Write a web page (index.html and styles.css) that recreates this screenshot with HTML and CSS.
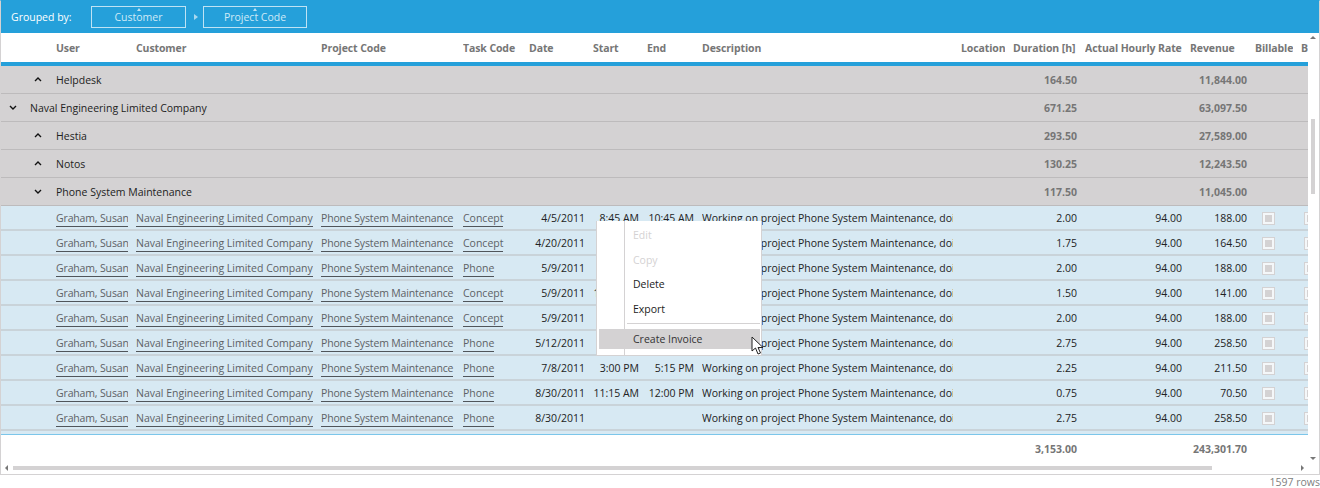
FILE: index.html
```html
<!DOCTYPE html>
<html lang="en">
<head>
  <meta charset="UTF-8" />
  <title>Timesheet grid</title>
  <link rel="stylesheet" href="styles.css">
</head>
<body>
  <div class="grid-box">
    <div class="group-bar">
      <span class="group-label">Grouped by:</span>
      <div class="chip chip-customer"><i class="chip-arrow"></i>Customer</div>
      <i class="chip-sep"></i>
      <div class="chip chip-project"><i class="chip-arrow"></i>Project Code</div>
    </div>

    <div class="row head-row">
      <span></span>
      <span>User</span><span>Customer</span><span>Project Code</span><span>Task Code</span>
      <span>Date</span><span>Start</span><span>End</span><span>Description</span><span>Location</span>
      <span>Duration [h]</span><span>Actual Hourly Rate</span><span>Revenue</span><span>Billable</span><span>B</span>
    </div>

    <div class="body-wrap">
      <div class="group level-2">
        <svg class="chev" viewBox="0 0 8 5"><path d="M1 4 L4 1 L7 4"/></svg>
        <span class="group-name">Helpdesk</span>
        <span class="group-dur">164.50</span><span class="group-rev">11,844.00</span>
      </div>
      <div class="group level-1">
        <svg class="chev" viewBox="0 0 8 5"><path d="M1 1 L4 4 L7 1"/></svg>
        <span class="group-name">Naval Engineering Limited Company</span>
        <span class="group-dur">671.25</span><span class="group-rev">63,097.50</span>
      </div>
      <div class="group level-2">
        <svg class="chev" viewBox="0 0 8 5"><path d="M1 4 L4 1 L7 4"/></svg>
        <span class="group-name">Hestia</span>
        <span class="group-dur">293.50</span><span class="group-rev">27,589.00</span>
      </div>
      <div class="group level-2">
        <svg class="chev" viewBox="0 0 8 5"><path d="M1 4 L4 1 L7 4"/></svg>
        <span class="group-name">Notos</span>
        <span class="group-dur">130.25</span><span class="group-rev">12,243.50</span>
      </div>
      <div class="group level-2">
        <svg class="chev" viewBox="0 0 8 5"><path d="M1 1 L4 4 L7 1"/></svg>
        <span class="group-name">Phone System Maintenance</span>
        <span class="group-dur">117.50</span><span class="group-rev">11,045.00</span>
      </div>
      <div id="rows"></div>
    </div>

    <div class="foot-row">
      <span class="foot-dur">3,153.00</span><span class="foot-rev">243,301.70</span>
    </div>

    <div class="hscroll">
      <i class="arrow-left"></i>
      <div class="hscroll-track"><div class="hscroll-thumb"></div></div>
      <i class="arrow-right"></i>
    </div>

    <div class="vscroll">
      <i class="arrow-up"></i>
      <div class="vscroll-track"><div class="vscroll-thumb"></div></div>
      <i class="arrow-down"></i>
    </div>

    <div class="menu">
      <div class="menu-item disabled">Edit</div>
      <div class="menu-item disabled">Copy</div>
      <div class="menu-item">Delete</div>
      <div class="menu-item">Export</div>
      <div class="menu-line"></div>
      <div class="menu-item active">Create Invoice</div>
    </div>

    <svg class="cursor" viewBox="0 0 15 20"><path d="M1 1 L1 15 L4.500 12 L7 18 L9.500 17 L7 11.500 L12 11.500 Z"/></svg>
  </div>

  <div class="row-count">1597 rows</div>

  <script>
    const data = [
      ['Concept', '4/5/2011', '8:45 AM', '10:45 AM', '2.00', '188.00'],
      ['Concept', '4/20/2011', '', '', '1.75', '164.50'],
      ['Phone', '5/9/2011', '', '', '2.00', '188.00'],
      ['Concept', '5/9/2011', '10:00 AM', '', '1.50', '141.00'],
      ['Concept', '5/9/2011', '', '', '2.00', '188.00'],
      ['Phone', '5/12/2011', '', '', '2.75', '258.50'],
      ['Phone', '7/8/2011', '3:00 PM', '5:15 PM', '2.25', '211.50'],
      ['Phone', '8/30/2011', '11:15 AM', '12:00 PM', '0.75', '70.50'],
      ['Phone', '8/30/2011', '', '', '2.75', '258.50']
    ];

    document.getElementById('rows').innerHTML = data.map(d => `
      <div class="row data-row">
        <span></span>
        <span><a class="tight">Graham, Susan</a></span>
        <span><a>Naval Engineering Limited Company</a></span>
        <span><a class="tight">Phone System Maintenance</a></span>
        <span><a>${d[0]}</a></span>
        <span class="num">${d[1]}</span>
        <span class="num">${d[2]}</span>
        <span class="num">${d[3]}</span>
        <span>Working on project Phone System Maintenance, doing some work</span>
        <span></span>
        <span class="num">${d[4]}</span>
        <span class="num">94.00</span>
        <span class="num">${d[5]}</span>
        <span class="check-cell first"><i class="check"></i></span>
        <span class="check-cell"><i class="check"></i></span>
      </div>`).join('');
  </script>
</body>
</html>
```

FILE: styles.css
```css
* { box-sizing: border-box; }

html, body { height: 488px; overflow: hidden; }

body {
  margin: 0;
  background: #fff;
  font-family: 'Open Sans', sans-serif;
  font-size: 10.5px;
  color: #222;
}

.grid-box {
  position: relative;
  width: 1320px;
  height: 475px;
  border: 1px solid #d4d2d3;
  border-top: 1px solid #25a0da;
  overflow: hidden;
}

/* top bar */
.group-bar {
  display: flex;
  align-items: center;
  height: 32px;
  background: #25a0da;
  color: #fff;
}
.group-label { margin-left: 10px; width: 80px; }
.chip {
  position: relative;
  height: 22px;
  line-height: 20px;
  border: 1px solid #bfe3f4;
  color: #cfeaf7;
  text-align: center;
}
.chip-customer { width: 95px; }
.chip-project { width: 104px; }
.chip-arrow {
  position: absolute;
  left: 50%;
  top: 1px;
  margin-left: -2px;
  border-left: 2.500px solid transparent;
  border-right: 2.500px solid transparent;
  border-bottom: 3px solid #bfe3f4;
}
.chip-sep {
  width: 0;
  margin: 0 5px 0 8px;
  border-top: 3px solid transparent;
  border-bottom: 3px solid transparent;
  border-left: 4px solid #a8d8ef;
}

/* shared columns */
.row {
  display: grid;
  grid-template-columns: 47px 72px 177px 134px 58px 56px 46px 47px 251px 44px 64px 97px 57px 38px 40px;
  column-gap: 8px;
  align-items: center;
  width: 1340px;
}
.row > span { overflow: hidden; white-space: nowrap; }
.num { text-align: right; }

.head-row {
  height: 29px;
  font-weight: 700;
  letter-spacing: -0.1px;
  color: #767676;
  width: 1307px;
  overflow: hidden;
}

.body-wrap {
  width: 1307px;
  height: 373px;
  overflow: hidden;
  background: #d7e9f3;
  border-top: 4px solid #25a0da;
  border-bottom: 1px solid #7cc6ea;
}

/* group rows */
.group {
  position: relative;
  display: flex;
  align-items: center;
  height: 28px;
  background: #d4d2d3;
  border-bottom: 1px solid #bdbbbc;
}
.group-name { position: absolute; }
.level-1 .group-name { left: 29px; }
.level-2 .group-name { left: 55px; }
.chev {
  position: absolute;
  width: 8px;
  height: 5px;
  fill: none;
  stroke: #111;
  stroke-width: 1.400;
}
.level-1 .chev { left: 8px; }
.level-2 .chev { left: 33px; }
.group-dur, .group-rev {
  position: absolute;
  font-weight: 700;
  color: #767676;
  text-align: right;
}
.group-dur { right: 231px; }
.group-rev { right: 61px; }

/* data rows */
.data-row {
  height: 25px;
  background: #d7e9f3;
  border-bottom: 2px solid #c9d3d9;
  color: #222;
}
.data-row a {
  color: #5d6165;
  border-bottom: 1px solid #50555a;
  padding-bottom: 1px;
}
.data-row a.tight { letter-spacing: -0.15px; }
.data-row > span { line-height: 18px; height: 20px; padding-top: 1px; }
.data-row > .check-cell { display: flex; align-items: center; height: 23px; padding: 2px 0 0 3px; }
.data-row > .check-cell.first { padding-left: 7px; }
.check {
  display: block;
  flex: none;
  width: 13px;
  height: 13px;
  padding: 2px;
  background: #d4d2d3 content-box;
  border: 1px solid #d4d2d3;
  box-shadow: inset 0 0 0 2px #f4f7f9;
}

/* totals */
.foot-row {
  position: relative;
  height: 29px;
  font-weight: 700;
  color: #767676;
}
.foot-dur, .foot-rev { position: absolute; top: 7px; }
.foot-dur { right: 242px; }
.foot-rev { right: 72px; }

/* scrollbars */
.hscroll {
  position: absolute;
  left: 4px;
  top: 464px;
  width: 1299px;
  height: 6px;
  display: flex;
  align-items: center;
}
.hscroll-track { flex: 1; margin: 0 8px 0 5px; height: 4px; }
.hscroll-thumb { width: 1199px; height: 4px; background: #d4d2d3; }
.arrow-left {
  border-top: 3px solid transparent;
  border-bottom: 3px solid transparent;
  border-right: 3px solid #777;
}
.arrow-right {
  border-top: 3px solid transparent;
  border-bottom: 3px solid transparent;
  border-left: 3px solid #777;
}
.vscroll {
  position: absolute;
  right: 0;
  top: 35px;
  width: 12px;
  height: 424px;
  display: flex;
  flex-direction: column;
  align-items: center;
}
.vscroll-track { flex: 1; width: 4px; margin: 2px 0; }
.vscroll-thumb { width: 4px; height: 75px; margin-top: 78px; background: #d4d2d3; }
.arrow-up {
  border-left: 3px solid transparent;
  border-right: 3px solid transparent;
  border-bottom: 3px solid #777;
}
.arrow-down {
  border-left: 3px solid transparent;
  border-right: 3px solid transparent;
  border-top: 3px solid #777;
}

/* context menu */
.menu {
  position: absolute;
  left: 595px;
  top: 220px;
  width: 166px;
  height: 135px;
  padding: 2px 1px 2px 2px;
  background: #fff;
  border: 1px solid #d4d2d3;
  border-top: 0;
}
.menu::before {
  content: '';
  position: absolute;
  left: 27px;
  top: 0;
  bottom: 0;
  width: 1px;
  background: #d4d2d3;
}
.menu-item {
  position: relative;
  height: 24.500px;
  line-height: 24.500px;
  padding-left: 34px;
  color: #222;
}
.menu-item.disabled { color: #d4d2d3; }
.menu-item.active {
  height: 20px;
  line-height: 20px;
  margin-top: 5px;
  background: #d4d2d3;
  color: #333;
}
.menu-line {
  position: relative;
  height: 1px;
  margin: 2px 0 0 28px;
  background: #d4d2d3;
}

.cursor {
  position: absolute;
  left: 750px;
  top: 335px;
  width: 15px;
  height: 20px;
  fill: #fff;
  stroke: #222;
  stroke-width: 1;
}

.row-count {
  text-align: right;
  line-height: 14px;
  color: #808080;
}
```
